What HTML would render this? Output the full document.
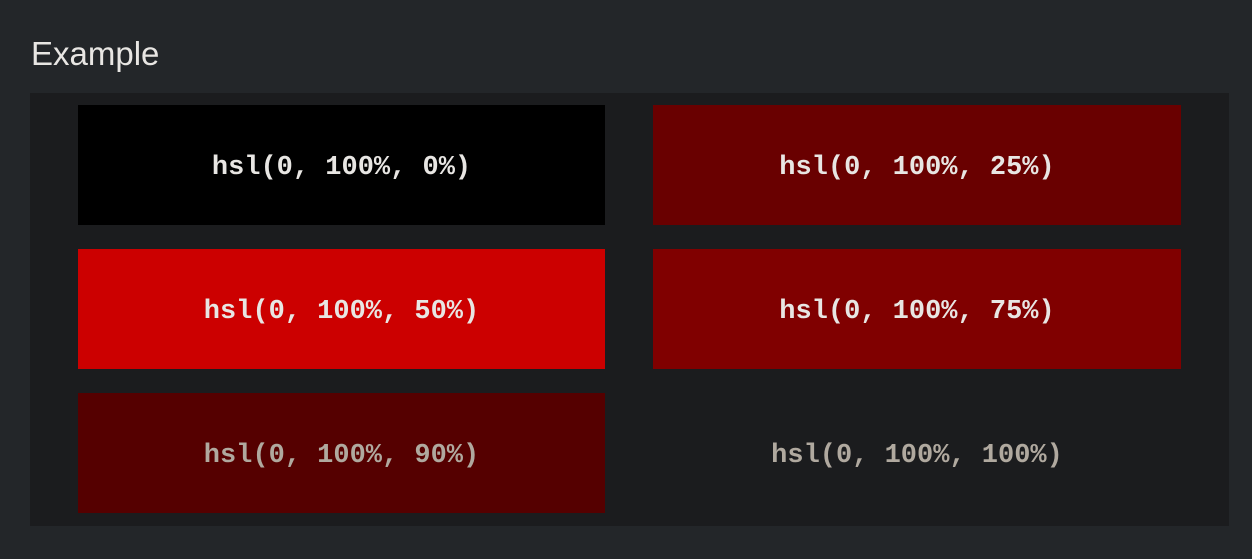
<!DOCTYPE html>
<html><head><style>
html,body{margin:0;padding:0;background:#232629;width:1252px;height:559px;overflow:hidden}
h1{position:absolute;left:31px;top:32px;margin:0;font:300 33px/44px "Liberation Sans",sans-serif;color:#e8e6e3}
.box{position:absolute;left:30px;top:93px;width:1199px;height:433px;background:#1b1c1e}
.c{position:absolute;width:527px;height:120px;box-sizing:border-box;padding-top:5px;display:flex;align-items:center;justify-content:center;font:bold 27px "Liberation Mono",monospace;color:#e8e6e3}
.g{color:#b0a99f}
</style></head><body>
<h1>Example</h1>
<div class="box"></div>
<div class="c" style="left:78px;top:105px;background:#000">hsl(0, 100%, 0%)</div>
<div class="c" style="left:653px;top:105px;background:#690000;width:528px">hsl(0, 100%, 25%)</div>
<div class="c" style="left:78px;top:249px;background:#cc0000">hsl(0, 100%, 50%)</div>
<div class="c" style="left:653px;top:249px;background:#800000;width:528px">hsl(0, 100%, 75%)</div>
<div class="c g" style="left:78px;top:393px;background:#550000">hsl(0, 100%, 90%)</div>
<div class="c g" style="left:653px;top:393px;width:528px">hsl(0, 100%, 100%)</div>
</body></html>
